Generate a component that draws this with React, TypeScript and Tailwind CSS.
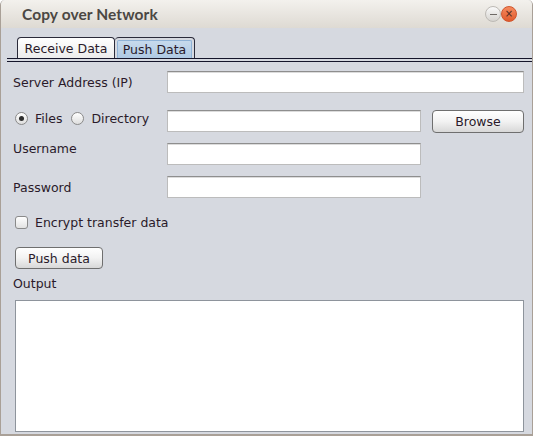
import React from "react";

const font = { fontFamily: '"DejaVu Sans", Verdana, sans-serif' };

function Input({ w }: { w: string }) {
  return (
    <div
      className={`${w} h-[22px] shrink-0 bg-white border border-[#bcbcbc] border-t-[#8e8e8e] shadow-[inset_0_1px_0_#dcdcdc]`}
    />
  );
}

function Radio({ checked }: { checked?: boolean }) {
  return (
    <div className="w-[13px] h-[13px] rounded-full border border-[#8a8a8a] bg-gradient-to-b from-[#ffffff] to-[#dedede] flex items-center justify-center shrink-0">
      {checked && <div className="w-[5px] h-[5px] rounded-full bg-[#2e2e2e]" />}
    </div>
  );
}

function Button({ label, w, h }: { label: string; w: string; h: string }) {
  return (
    <div
      className={`${w} ${h} rounded-[4px] border border-[#6f6f6f] bg-gradient-to-b from-[#ffffff] via-[#f2f2f2] to-[#d8d8d8] flex items-center justify-center text-[#2a1a2a]`}
    >
      {label}
    </div>
  );
}

export default function App() {
  return (
    <div
      className="w-[533px] h-[436px] flex flex-col overflow-hidden rounded-t-[5px] border-x border-b-2 border-[#a9a097] bg-[#d6d9e0]"
      style={font}
    >
      {/* Title bar */}
      <div className="h-[28px] shrink-0 flex items-center bg-gradient-to-b from-[#f3f1ed] to-[#dedad3] pl-[21px] pr-[15px]">
        <div
          className="text-[15.5px] font-bold text-[#4b4743] flex-1 leading-[27px] tracking-[0.1px]"
          style={{ fontFamily: 'Lato, "DejaVu Sans", sans-serif' }}
        >
          Copy over Network
        </div>
        <div className="flex items-center">
          <div className="w-[16px] h-[16px] rounded-full border border-[#bdbab5] bg-gradient-to-b from-[#fafafa] to-[#d6d4d0] flex items-center justify-center">
            <div className="w-[7px] h-[1px] bg-[#6e6a66]" />
          </div>
          <div className="w-[16px] h-[16px] rounded-full border border-[#d0552c] bg-gradient-to-b from-[#f58a5e] to-[#e05a2c] flex items-center justify-center text-[#4a2a20] text-[10px] leading-none">
            ×
          </div>
        </div>
      </div>

      {/* Content */}
      <div className="flex-1 flex flex-col text-[12.5px] leading-[15px] text-[#2a1a2a] pr-[8px]">
        {/* Tabs */}
        <div className="mt-[9px] ml-[6px] mr-[-8px] flex flex-col">
          <div className="flex pl-[10px] h-[21px]">
            <div className="w-[98px] h-[21px] border border-b-0 border-[#2b2b3a] rounded-t-[4px] bg-gradient-to-b from-[#ffffff] to-[#ececec] flex items-center justify-center pt-[1px]">
              Receive Data
            </div>
            <div className="w-[80px] h-[21px] border border-b-0 border-l-0 border-[#2b2b3a] rounded-t-[4px] p-[2px] pb-0 bg-[#d6d9e0]">
              <div className="w-full h-full rounded-t-[2px] border border-b-0 border-[#8fb2d6] bg-gradient-to-b from-[#c7daec] to-[#afc9e3] flex items-center justify-center">
                Push Data
              </div>
            </div>
          </div>
          <div className="h-[1px] bg-[#15152a]" />
          <div className="h-[2px]" />
          <div className="h-[1px] bg-[#15152a]" />
        </div>

        {/* Server address */}
        <div className="mt-[9px] h-[22px] flex items-center pl-[12px]">
          <div className="w-[154px] pt-[1px]">Server Address (IP)</div>
          <Input w="w-[357px]" />
        </div>

        {/* Files / Directory */}
        <div className="mt-[17px] h-[23px] flex items-start pl-[14px]">
          <div className="w-[152px] h-[15px] mt-[1px] flex items-center">
            <Radio checked />
            <span className="ml-[7px]">Files</span>
            <span className="ml-[9px] flex">
              <Radio />
            </span>
            <span className="ml-[7px]">Directory</span>
          </div>
          <Input w="w-[254px]" />
          <div className="ml-[11px]">
            <Button label="Browse" w="w-[92px]" h="h-[23px]" />
          </div>
        </div>

        {/* Username */}
        <div className="mt-[10px] h-[22px] flex items-start pl-[12px]">
          <div className="w-[154px] mt-[-2px]">Username</div>
          <Input w="w-[254px]" />
        </div>

        {/* Password */}
        <div className="mt-[11px] h-[22px] flex items-center pl-[12px]">
          <div className="w-[154px]">Password</div>
          <Input w="w-[254px]" />
        </div>

        {/* Encrypt */}
        <div className="mt-[17px] h-[15px] flex items-center pl-[14px]">
          <div className="w-[13px] h-[13px] rounded-[3px] border border-[#8a8a8a] bg-gradient-to-b from-[#ffffff] to-[#e2e2e2]" />
          <span className="ml-[7px]">Encrypt transfer data</span>
        </div>

        {/* Push data */}
        <div className="mt-[17px] pl-[14px]">
          <Button label="Push data" w="w-[88px]" h="h-[22px]" />
        </div>

        {/* Output */}
        <div className="mt-[7px] pl-[12px] h-[15px]">Output</div>

        <div className="mt-[9px] ml-[14px] h-[132px] bg-white border border-[#8e949c]" />
      </div>
    </div>
  );
}
